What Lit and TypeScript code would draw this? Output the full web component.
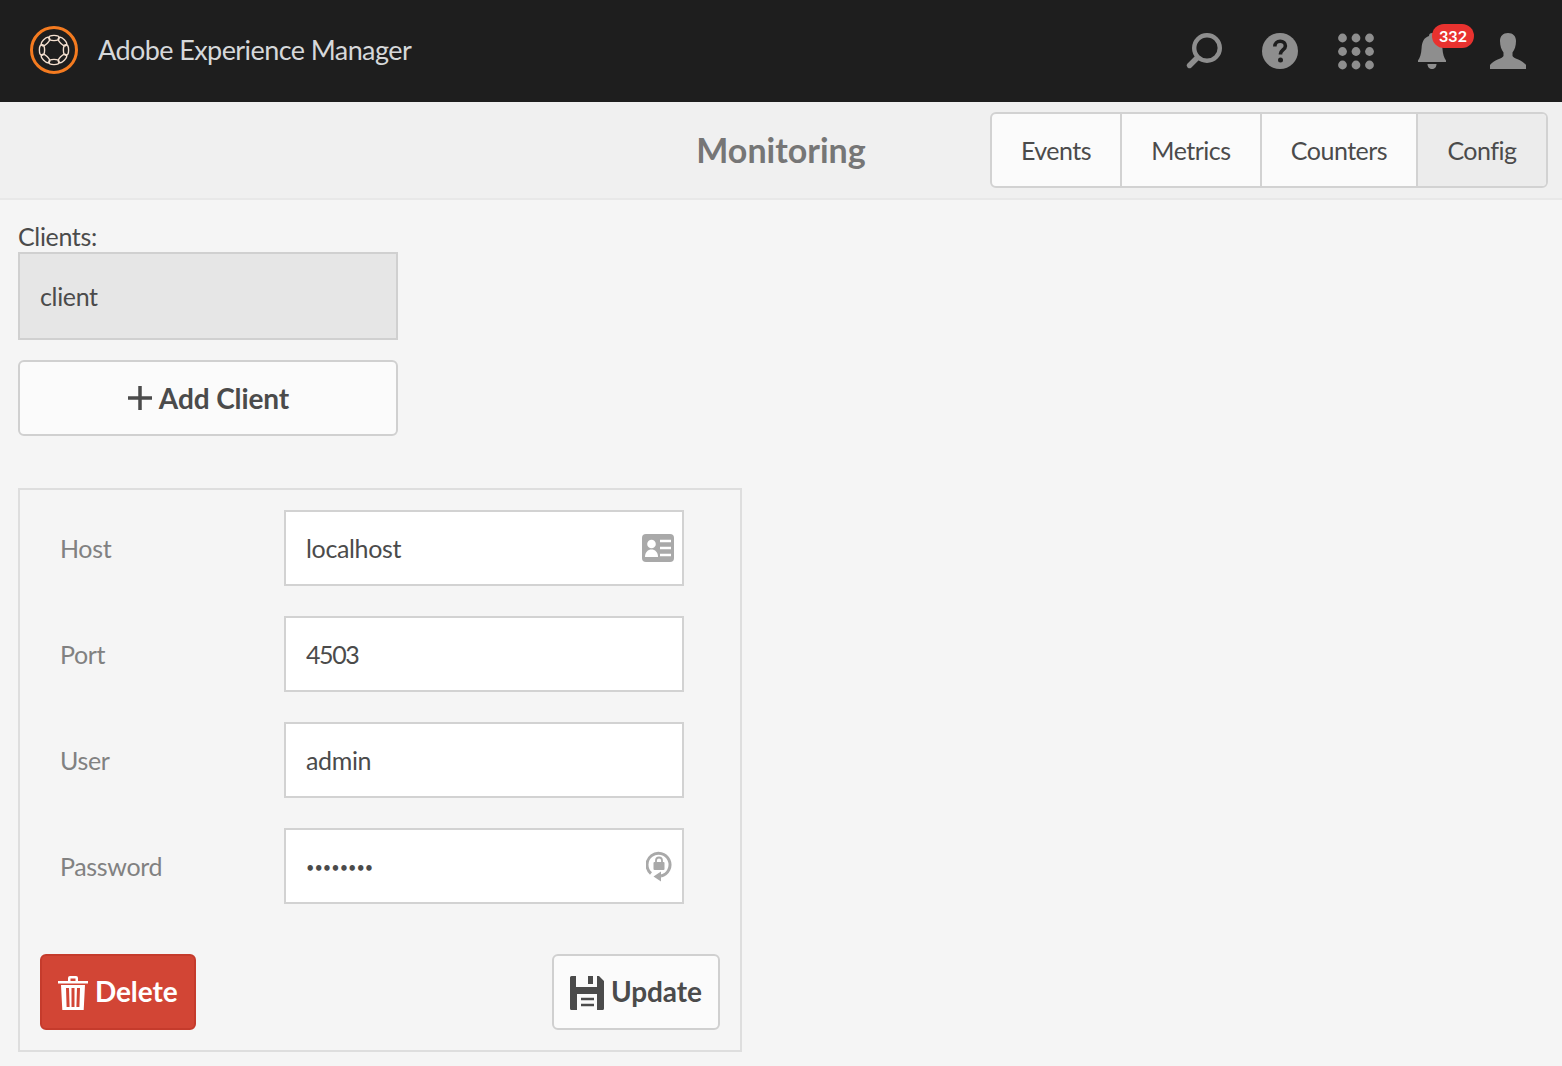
import { LitElement, html, css, svg } from "lit";
import { customElement } from "lit/decorators.js";

const links = [0, 45, 90, 135, 180, 225, 270, 315].map((a) => {
  const r = (a * Math.PI) / 180;
  const x = 24 + 12 * Math.cos(r);
  const y = 24 + 12 * Math.sin(r);
  return svg`<ellipse cx=${x} cy=${y} rx="2.6" ry="5.2" transform="rotate(${a} ${x} ${y})" fill="none" stroke="#f3dfcf" stroke-width="1.4"/>`;
});

const dots = [7, 20.5, 34].flatMap((y) =>
  [6.5, 20, 33.5].map((x) => svg`<circle cx=${x} cy=${y} r="4.4" fill="#8e8e8e"/>`)
);

@customElement("app-root")
export class AppRoot extends LitElement {
  static styles = css`
    :host { display: block; min-height: 1066px; background: #f5f5f5; color: #4b4b4b; font-family: "Lato", "Noto Sans", sans-serif; font-size: 25px; letter-spacing: -0.35px; overflow: hidden; }
    * { box-sizing: border-box; }
    .top { height: 102px; background: #1e1e1e; display: flex; align-items: center; padding: 0 16px 0 30px; }
    .logo { width: 48px; height: 48px; margin-top: -2px; }
    .brand { margin-left: 20px; color: #d6d8da; font-size: 27px; margin-top: -4px; flex: 1; letter-spacing: -0.58px; }
    .tools { display: flex; }
    .tool { position: relative; width: 76px; height: 40px; display: flex; justify-content: center; }
    .tool svg { width: 40px; height: 40px; display: block; }
    .badge { position: absolute; left: 38px; top: -7px; width: 42px; height: 24px; border-radius: 12px; background: #e8322f; color: #fff; font-size: 16px; font-weight: 700; line-height: 24px; text-align: center; letter-spacing: 0; }
    .sub { height: 98px; background: #f0f0f0; border-bottom: 2px solid #e8e8e8; display: grid; grid-template-columns: 1fr auto 1fr; align-items: center; padding: 0 14px 0 0; }
    .title { grid-column: 2; font-size: 34px; font-weight: 700; letter-spacing: 0; color: #767676; margin-left: 14px; margin-top: -2px; }
    .tabs { grid-column: 3; justify-self: end; display: flex; height: 76px; border: 2px solid #d2d2d2; border-radius: 6px; overflow: hidden; background: #fbfbfb; letter-spacing: -0.5px; }
    .tab { display: flex; align-items: center; justify-content: center; border-right: 2px solid #d2d2d2; }
    .tab:last-child { border-right: 0; background: #ececec; }
    .content { padding: 21px 18px 0; }
    .lbl { height: 31px; line-height: 30px; }
    .client { width: 380px; height: 88px; border: 2px solid #d0d0d0; background: #e6e6e6; display: flex; align-items: center; padding: 0 0 0 20px; }
    .add { width: 380px; height: 76px; margin-top: 20px; border: 2px solid #d0d0d0; border-radius: 6px; background: #fbfbfb; display: flex; align-items: center; justify-content: center; gap: 6px; font-size: 28px; font-weight: 700; color: #4b4b4b; font-family: inherit; letter-spacing: -0.1px; padding: 0; }
    .add svg { width: 26px; height: 26px; }
    .panel { width: 724px; height: 564px; margin-top: 52px; border: 2px solid #dedede; padding: 20px; display: flex; flex-direction: column; }
    .rows { display: flex; flex-direction: column; gap: 30px; padding-left: 20px; }
    .row { display: grid; grid-template-columns: 224px 400px; align-items: center; }
    .row label { color: #818181; }
    .field { position: relative; height: 76px; }
    .field input { width: 100%; height: 100%; border: 2px solid #d2d2d2; background: #fff; padding: 0 20px; font: inherit; letter-spacing: inherit; color: #4b4b4b; outline: none; border-radius: 0; }
    .field input.num { letter-spacing: -1.4px; }
    .field input.pw { font-size: 14.5px; letter-spacing: 0; padding-top: 2px; }
    .field svg { position: absolute; }
    .card { right: 10px; top: 24px; width: 32px; height: 28px; }
    .lock { right: 12px; top: 21px; width: 26px; height: 34px; }
    .actions { display: flex; justify-content: space-between; margin-top: 50px; }
    .btn { height: 76px; border-radius: 6px; border: 2px solid #d0d0d0; background: #fbfbfb; display: flex; align-items: center; font: inherit; font-size: 28px; font-weight: 700; letter-spacing: -0.1px; padding: 0; color: #4b4b4b; }
    .del { width: 156px; background: #d24535; border-color: #c53b2c; color: #fff; padding: 0 0 2px 16px; gap: 7px; }
    .del svg { width: 30px; height: 36px; margin-top: 4px; }
    .upd { width: 168px; padding: 0 0 2px 16px; gap: 7px; }
    .upd svg { width: 34px; height: 34px; margin-top: 4px; }
  `;

  render() {
    const tabs: [string, number][] = [["Events", 130], ["Metrics", 140], ["Counters", 156], ["Config", 128]];
    return html`
      <header class="top">
        <svg class="logo" viewBox="0 0 48 48">
          <circle cx="24" cy="24" r="22.5" fill="none" stroke="#f47b20" stroke-width="3"/>
          ${links}
        </svg>
        <div class="brand">Adobe Experience Manager</div>
        <div class="tools">
          <div class="tool"><svg viewBox="0 0 40 40"><circle cx="23" cy="17" r="12.8" fill="none" stroke="#8e8e8e" stroke-width="4.4"/><path d="M13 27 5.5 34.5" stroke="#8e8e8e" stroke-width="5.4" stroke-linecap="round"/></svg></div>
          <div class="tool"><svg viewBox="0 0 40 40"><circle cx="20" cy="20" r="18" fill="#8e8e8e"/><path d="M14.8 15.500c0-3.200 2.200-5.200 5.400-5.200 3.100 0 5.200 1.900 5.200 4.600 0 3.800-4.900 4.200-4.900 7.900v.7" fill="none" stroke="#1e1e1e" stroke-width="3.600"/><circle cx="20.500" cy="29" r="2.500" fill="#1e1e1e"/></svg></div>
          <div class="tool"><svg viewBox="0 0 40 40">${dots}</svg></div>
          <div class="tool"><svg viewBox="0 0 40 40"><path d="M20 2c-1.800 0-3 1.300-3 3C12 6.500 10 11 9.600 17c-.4 6-1.600 10-3.600 12.500V31h28v-1.500C32 27 30.800 23 30.400 17 30 11 28 6.500 23 5c0-1.700-1.200-3-3-3Z" fill="#8e8e8e"/><path d="M15.500 33h9c0 3-2 5-4.500 5s-4.500-2-4.500-5Z" fill="#8e8e8e"/></svg><span class="badge">332</span></div>
          <div class="tool"><svg viewBox="0 0 40 40"><path d="M20 2c-5 0-8 3-8 8 0 5 1.500 9 3.500 11.500v3.500C14 28 6 28.500 2 34v4h36v-4c-4-5.500-12-6-13.500-9v-3.500C26.500 19 28 15 28 10c0-5-3-8-8-8Z" fill="#8e8e8e"/></svg></div>
        </div>
      </header>
      <section class="sub">
        <div class="title">Monitoring</div>
        <nav class="tabs">
          ${tabs.map(([t, w]) => html`<div class="tab" style="width:${w}px">${t}</div>`)}
        </nav>
      </section>
      <main class="content">
        <div class="lbl">Clients:</div>
        <div class="client">client</div>
        <button class="add"><svg viewBox="0 0 26 26"><path d="M13 1v24M1 13h24" stroke="#4b4b4b" stroke-width="3.500"/></svg>Add Client</button>
        <section class="panel">
          <div class="rows">
            <div class="row"><label>Host</label><div class="field"><input value="localhost"/>
              <svg class="card" viewBox="0 0 32 28"><rect width="32" height="28" rx="4" fill="#a9a9a9"/><circle cx="9.500" cy="10" r="4.300" fill="#fff"/><path d="M3 23c0-5 3-7.500 6.500-7.500S16 18 16 23Z" fill="#fff"/><path d="M18 7h11M18 14h11M18 21h11" stroke="#fff" stroke-width="2.400"/></svg></div></div>
            <div class="row"><label>Port</label><div class="field"><input class="num" value="4503"/></div></div>
            <div class="row"><label>User</label><div class="field"><input value="admin"/></div></div>
            <div class="row"><label>Password</label><div class="field"><input class="pw" type="password" value="12345678"/>
              <svg class="lock" viewBox="0 0 26 34"><path d="M5 24.500A11.500 11.500 0 1 1 15 27" fill="none" stroke="#a9a9a9" stroke-width="3"/><path d="M15 22.500v10L7.500 27.500Z" fill="#a9a9a9"/><rect x="7.500" y="13" width="11" height="8" rx="1" fill="#a9a9a9"/><path d="M10 13v-1.500a3 3 0 0 1 6 0V13" fill="none" stroke="#a9a9a9" stroke-width="1.800"/></svg></div></div>
          </div>
          <div class="actions">
            <button class="btn del"><svg viewBox="0 0 30 36"><path d="M0 6h30v2.500H0ZM10 6V3a2 2 0 0 1 2-2h6a2 2 0 0 1 2 2v3h-2.500V3.500h-5V6Z" fill="#fff"/><path d="M3 10h24l-1.300 25H4.300ZM8 13l.6 19h3L11 13Zm5.500 0v19h3V13ZM19 13l-.6 19h3L22 13Z" fill="#fff" fill-rule="evenodd"/></svg>Delete</button>
            <button class="btn upd"><svg viewBox="0 0 34 34"><path d="M1.500 0H6v11h21V0h2l5 5v27.500a1.500 1.500 0 0 1-1.500 1.500h-31A1.500 1.500 0 0 1 0 32.500v-31A1.500 1.500 0 0 1 1.500 0ZM7 18v16h20V18Z" fill="#4b4b4b" fill-rule="evenodd"/><path d="M18 0h5v8h-5Z" fill="#4b4b4b"/><path d="M11 23h13M11 29h13" stroke="#4b4b4b" stroke-width="2.500"/></svg>Update</button>
          </div>
        </section>
      </main>
    `;
  }
}
